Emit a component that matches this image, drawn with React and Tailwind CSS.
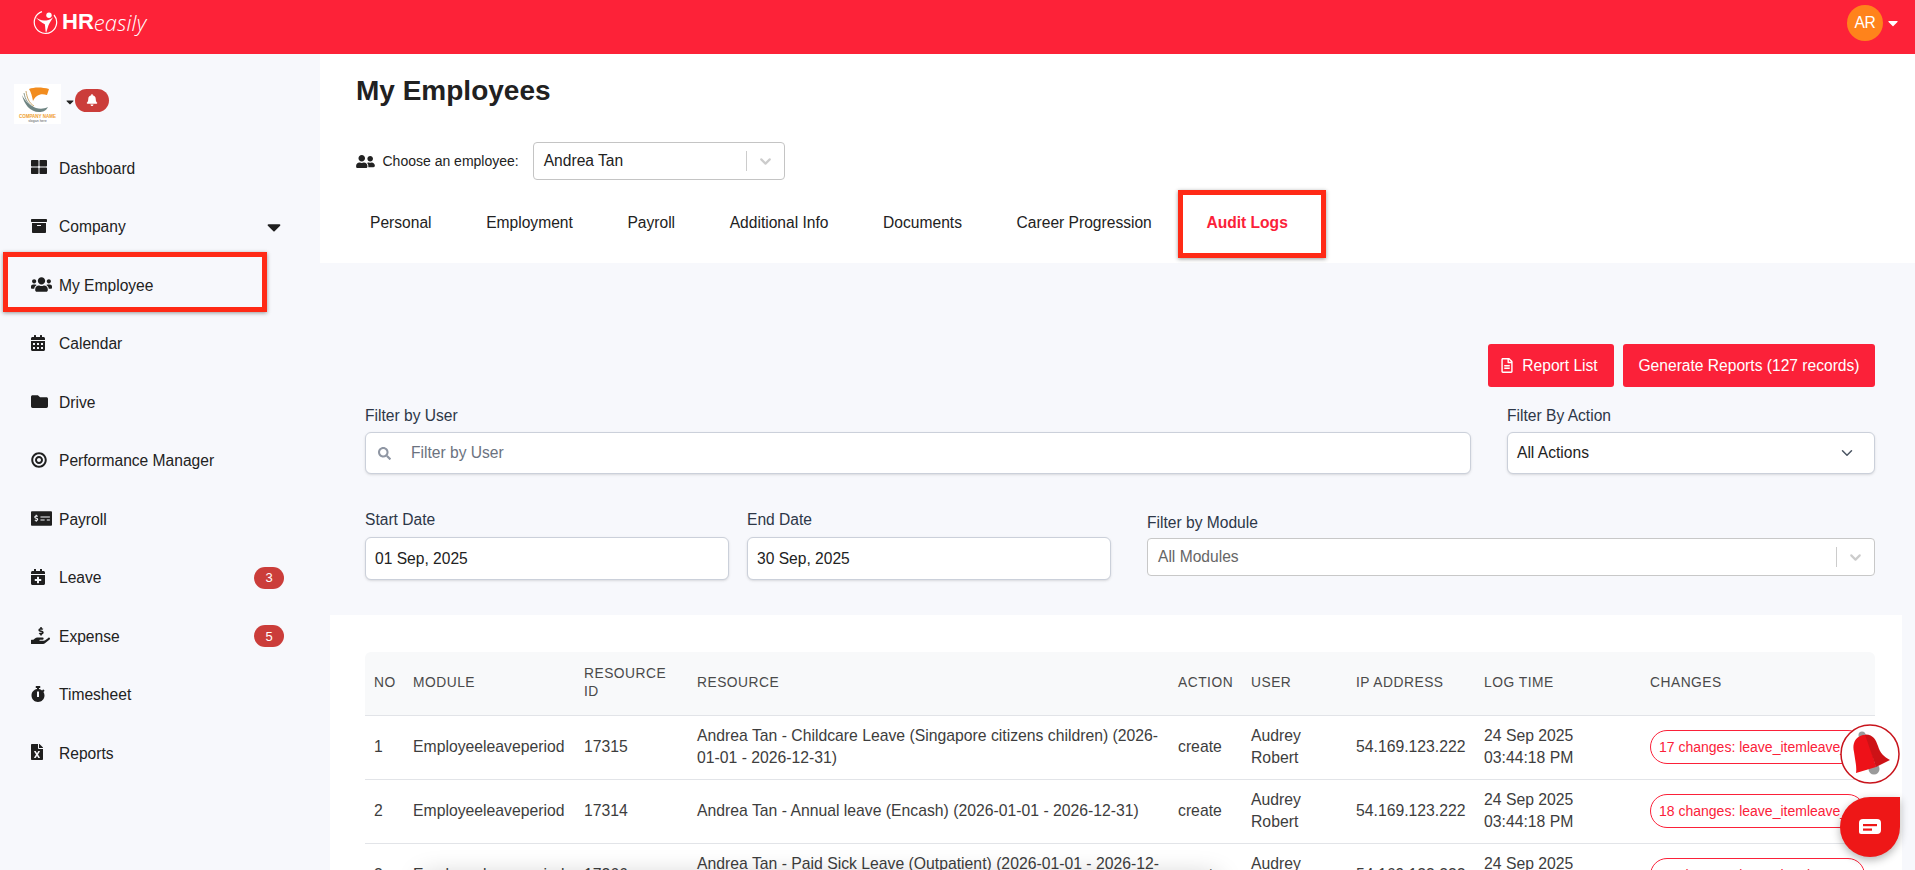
import React from "react";
import { FaThLarge, FaArchive, FaUsers, FaCalendarAlt, FaFolder, FaBullseye, FaMoneyCheckAlt, FaCalendarPlus, FaHandHoldingUsd, FaStopwatch, FaFileExcel, FaBell, FaUserFriends, FaSearch, FaRegFileAlt, FaCaretDown } from "react-icons/fa";
import { ChevronDown } from "lucide-react";

const nav = [
  [FaThLarge, "Dashboard", null, "w-[16px] h-[16px]"],
  [FaArchive, "Company", "caret", "w-[16px] h-[16px]"],
  [FaUsers, "My Employee", null, "w-[21px] h-[17px]"],
  [FaCalendarAlt, "Calendar", null, "w-[14px] h-[16px]"],
  [FaFolder, "Drive", null, "w-[17px] h-[17px]"],
  [FaBullseye, "Performance Manager", null, "w-[16px] h-[16px]"],
  [FaMoneyCheckAlt, "Payroll", null, "w-[21px] h-[17px]"],
  [FaCalendarPlus, "Leave", "3", "w-[14px] h-[16px]"],
  [FaHandHoldingUsd, "Expense", "5", "w-[19px] h-[17px]"],
  [FaStopwatch, "Timesheet", null, "w-[14px] h-[16px]"],
  [FaFileExcel, "Reports", null, "w-[12px] h-[16px]"],
];

const tabs = ["Personal", "Employment", "Payroll", "Additional Info", "Documents", "Career Progression"];

const rows = [
  ["1", "Employeeleaveperiod", "17315", "Andrea Tan - Childcare Leave (Singapore citizens children) (2026-01-01 - 2026-12-31)", "17 changes: leave_itemleave_..."],
  ["2", "Employeeleaveperiod", "17314", "Andrea Tan - Annual leave (Encash) (2026-01-01 - 2026-12-31)", "18 changes: leave_itemleave_..."],
  ["3", "Employeeleaveperiod", "17266", "Andrea Tan - Paid Sick Leave (Outpatient) (2026-01-01 - 2026-12-31)", "16 changes: leave_itemleave_..."],
];

const heads = ["NO", "MODULE", "RESOURCE ID", "RESOURCE", "ACTION", "USER", "IP ADDRESS", "LOG TIME", "CHANGES"];

function Logo() {
  return (
    <div className="flex items-center text-white mb-[10px]">
      <svg width="25" height="25" viewBox="0 0 25 25" fill="none" className="mr-[4px]">
        <path d="M9 1.6A11.2 11.2 0 1 0 21 5" stroke="white" strokeWidth="1.2" />
        <circle cx="16" cy="5.2" r="2.7" fill="white" />
        <path d="M2.5 7c2.5 2.2 5.5 3.6 8.5 3.6 3 0 6-.8 9-3.4-1.5 3.4-3.5 5.4-4.5 8-1 2.800-1.500 5.500-2.500 8-.8-2.800-.6-6-1.200-9-2.800-1.500-6.800-3.800-9.300-7.200z" fill="white" />
      </svg>
      <span className="text-[22px] font-bold leading-none">HR</span>
      <span className="text-[22px] italic font-light leading-none font-['Open_Sans',sans-serif] tracking-[0.1px]">easily</span>
    </div>
  );
}

function CompanyLogo() {
  return (
    <div className="w-[47px] h-[40px] bg-white flex flex-col items-center overflow-hidden">
      <svg width="47" height="30" viewBox="0 0 47 30" fill="none" className="shrink-0">
        <path d="M15 5C20 3 28 3 35 5L33 11C29 10 26 10 23 12C21 13 20 15 19 17C18 12 17 8 15 5Z" fill="#f28c1e" />
        <path d="M12 7C13 14 15 19 20 22" stroke="#c9a66b" strokeWidth="1" />
        <path d="M10 9C11 15 14 20 19 23" stroke="#8b9a8f" strokeWidth="1" />
        <path d="M8 11C10 20 16 28 25 28C29 28 32 27 34 23C30 25 26 25 22 24C16 22 11 17 8 11Z" fill="#6f8583" />
      </svg>
      <span className="text-[4.5px] font-bold leading-[5px] text-[#f0a030] whitespace-nowrap">COMPANY NAME</span>
      <span className="text-[3.5px] leading-[4px] text-[#555] whitespace-nowrap">slogan here</span>
    </div>
  );
}

function Sidebar() {
  return (
    <aside className="w-[320px] shrink-0 bg-[#f7f8fc] h-full">
      <div className="flex items-center pl-[14px] pt-[30px]">
        <CompanyLogo />
        <FaCaretDown className="ml-[5px] text-[#222] h-[12px] w-[8px] -mt-[4px]" />
        <span className="flex items-center justify-center w-[34px] h-[23px] rounded-full bg-[#cb3d3a] ml-[1px] -mt-[8px]">
          <FaBell className="text-white w-[12px] h-[12px]" />
        </span>
      </div>
      <nav className="mt-[15px] flex flex-col">
        {nav.map(([Icon, label, extra, size]) => (
          <div key={label} className="h-[58.5px] flex items-center pl-[31px] pr-[36px] text-[15.6px] text-[#222]">
            <span className="w-[28px] flex items-center -mt-[2px]"><Icon className={`text-[#1f1f1f] shrink-0 ${size}`} /></span>
            <span className="flex-1">{label}</span>
            {extra === "caret" && <FaCaretDown className="text-[#1f1f1f] w-[14px] h-[22px] mr-[3.5px]" />}
            {extra && extra !== "caret" && (
              <span className="w-[30px] h-[22px] rounded-full bg-[#cb3d3a] text-white text-[13px] flex items-center justify-center">{extra}</span>
            )}
          </div>
        ))}
      </nav>
    </aside>
  );
}

function Field({ label, className, labelClass = "mb-[8px]", children }) {
  return (
    <div className={className}>
      <div className={`text-[15.6px] leading-[18px] text-[#2d3748] ${labelClass}`}>{label}</div>
      {children}
    </div>
  );
}

function Main() {
  return (
    <main className="flex-1 min-w-0 h-full bg-[#f7f8fc]">
      <section className="bg-white h-[209px] pl-[36px]">
        <h1 className="pt-[20px] text-[28px] leading-[34px] font-bold text-[#212121]">My Employees</h1>
        <div className="mt-[34px] flex items-center">
          <FaUserFriends className="text-[#222] w-[19px] h-[15px]" />
          <span className="ml-[7.5px] text-[14px] text-[#222]">Choose an employee:</span>
          <div className="ml-[14px] w-[252px] h-[38px] rounded-[4px] border border-[#c4c4c4] flex items-center pl-[10px] text-[15.6px] text-[#222]">
            <span className="flex-1">Andrea Tan</span>
            <span className="w-px h-[20px] bg-[#ccc]" />
            <ChevronDown className="w-[17px] h-[17px] mx-[10px] text-[#ccc]" strokeWidth={3} />
          </div>
        </div>
        <div className="mt-[14px] flex items-center gap-[54.6px] pl-[14px] h-[58px] text-[15.6px] text-[#222]">
          {tabs.map((t) => (
            <span key={t} className="whitespace-nowrap">{t}</span>
          ))}
          <span className="font-bold text-[#fb2139] whitespace-nowrap">Audit Logs</span>
        </div>
      </section>

      <section className="pl-[45px] pr-[40px] pt-[81px] h-[352px]">
        <div className="flex justify-end gap-[9px]">
          <button className="h-[43px] w-[126px] rounded-[3px] bg-[#fb2139] text-white text-[15.6px] flex items-center justify-center gap-[9px] pr-[3px]">
            <FaRegFileAlt className="w-[12px] h-[15px]" />Report List
          </button>
          <button className="h-[43px] w-[252px] rounded-[3px] bg-[#fb2139] text-white text-[15.6px] flex items-center justify-center">
            Generate Reports (127 records)
          </button>
        </div>
        <div className="flex gap-[36px] mt-[20px]">
          <Field label="Filter by User" className="w-[1106px]" labelClass="mb-[7px]">
            <div className="h-[42px] rounded-[6px] bg-white border border-[#cbd0da] flex items-center pl-[12px] text-[15.6px] text-[#6b7280] shadow-sm">
              <FaSearch className="text-[#8f96a3] text-[13px] mr-[20px]" />Filter by User
            </div>
          </Field>
          <Field label="Filter By Action" className="w-[368px]" labelClass="mb-[7px]">
            <div className="h-[42px] rounded-[6px] bg-white border border-[#cbd0da] flex items-center justify-between pl-[9px] pr-[18px] text-[15.6px] text-[#222] shadow-sm">
              All Actions<ChevronDown className="w-[18px] h-[18px] text-[#4b5563]" strokeWidth={2} />
            </div>
          </Field>
        </div>
        <div className="flex mt-[37px]">
          <Field label="Start Date" className="w-[364px]">
            <div className="h-[43px] rounded-[6px] bg-white border border-[#cbd0da] flex items-center pl-[9px] text-[15.6px] text-[#222] shadow-sm">01 Sep, 2025</div>
          </Field>
          <Field label="End Date" className="w-[364px] ml-[18px]">
            <div className="h-[43px] rounded-[6px] bg-white border border-[#cbd0da] flex items-center pl-[9px] text-[15.6px] text-[#222] shadow-sm">30 Sep, 2025</div>
          </Field>
          <Field label="Filter by Module" className="w-[728px] ml-[36px]" labelClass="mt-[3px]">
            <div className="h-[38px] mt-[6px] rounded-[4px] bg-white border border-[#c8c8c8] flex items-center pl-[10px] text-[15.6px] text-[#666]">
              <span className="flex-1">All Modules</span>
              <span className="w-px h-[20px] bg-[#ccc]" />
              <ChevronDown className="w-[17px] h-[17px] mx-[10px] text-[#ccc]" strokeWidth={3} />
            </div>
          </Field>
        </div>
      </section>

      <section className="ml-[10px] mr-[13px] h-[300px] bg-white pl-[35px] pr-[27px] pt-[37px]">
        <table className="w-[1510px] table-fixed border-collapse text-[15.75px] text-[#3d3d3d]">
          <colgroup>
            <col className="w-[39px]" /><col className="w-[171px]" /><col className="w-[113px]" /><col className="w-[481px]" />
            <col className="w-[73px]" /><col className="w-[105px]" /><col className="w-[128px]" /><col className="w-[166px]" /><col className="w-[234px]" />
          </colgroup>
          <thead>
            <tr className="h-[63px] border-b border-[#e2e4e8]">
              {heads.map((h) => (
                <th key={h} className="px-[9px] bg-[#f8f9fa] first:rounded-tl-[6px] last:rounded-tr-[6px] text-left text-[13.8px] leading-[18px] font-normal tracking-[0.5px] text-[#4a4a4a]">{h}</th>
              ))}
            </tr>
          </thead>
          <tbody>
            {rows.map((r) => (
              <tr key={r[0]} className="h-[64px] border-b border-[#e2e4e8] leading-[22px]">
                <td className="px-[9px]">{r[0]}</td>
                <td className="px-[9px]">{r[1]}</td>
                <td className="px-[9px]">{r[2]}</td>
                <td className="px-[9px]">{r[3]}</td>
                <td className="px-[9px]">create</td>
                <td className="px-[9px]">Audrey Robert</td>
                <td className="px-[9px]">54.169.123.222</td>
                <td className="px-[9px]">24 Sep 2025<br />03:44:18 PM</td>
                <td className="px-[9px]">
                  <span className="flex items-center h-[34px] w-[215px] rounded-full border border-[#fb2139] text-[#fb2139] text-[14px] pl-[8px] overflow-hidden whitespace-nowrap">{r[4]}</span>
                </td>
              </tr>
            ))}
          </tbody>
        </table>
      </section>
    </main>
  );
}

function Floating() {
  return (
    <>
      <svg width="60" height="60" viewBox="0 0 60 60" className="absolute left-[1840px] top-[724px]">
        <circle cx="30" cy="30" r="29" fill="white" stroke="#c8141c" strokeWidth="1.500" />
        <circle cx="22" cy="11" r="3.500" fill="#9a9a9a" />
        <circle cx="34" cy="45" r="5.500" fill="#9a9a9a" />
        <path d="M23 11C15 13 12 20 14 28C15 36 17 43 16 49L36 43L27 11Z" fill="#ee1118" />
        <path d="M25 10.500C33 10 36 16 38 22C40 29 44 33 50 36L36 43Z" fill="#cd1216" />
      </svg>
      <div className="absolute left-[1840px] top-[797px] w-[60px] h-[60px] rounded-full rounded-tr-[8px] bg-[#ee1717] shadow-[0_3px_8px_rgba(0,0,0,0.3)] flex items-center justify-center">
        <svg width="24" height="18" viewBox="0 0 24 18">
          <path d="M5 1h14a4 4 0 0 1 4 4v7a4 4 0 0 1-4 4H3a2 2 0 0 1-2-2V5a4 4 0 0 1 4-4z" fill="white" />
          <rect x="5" y="6" width="14" height="2.200" fill="#ee1717" />
          <rect x="5" y="10.500" width="9" height="2.200" fill="#ee1717" />
        </svg>
      </div>
    </>
  );
}

export default function App() {
  return (
    <div className="relative w-[1915px] h-[870px] overflow-hidden bg-[#f7f8fc] font-['Liberation_Sans',Arial,sans-serif]">
      <header className="h-[54px] bg-[#fd2238] flex items-center justify-between pl-[33px] pr-[17px]">
        <Logo />
        <div className="flex items-center mb-[8px]">
          <span className="w-[36px] h-[36px] rounded-full bg-[#ff831b] text-white text-[15.6px] tracking-[-0.3px] flex items-center justify-center">AR</span>
          <FaCaretDown className="ml-[5px] text-white w-[10px] h-[16px]" />
        </div>
      </header>
      <div className="flex h-[816px]">
        <Sidebar />
        <Main />
      </div>
      <div className="absolute left-[3px] top-[252px] w-[264px] h-[60px] border-[5px] border-[#ff2a16] shadow-[0_1px_4px_rgba(0,0,0,0.4)]" />
      <div className="absolute left-[1178px] top-[190px] w-[148px] h-[68px] border-[5px] border-[#ff2a16] shadow-[0_1px_4px_rgba(0,0,0,0.4)]" />
      <div className="absolute left-[420px] top-[876px] w-[800px] h-[20px] rounded-full shadow-[0_0_26px_rgba(0,0,0,0.22)]" />
      <Floating />
    </div>
  );
}
